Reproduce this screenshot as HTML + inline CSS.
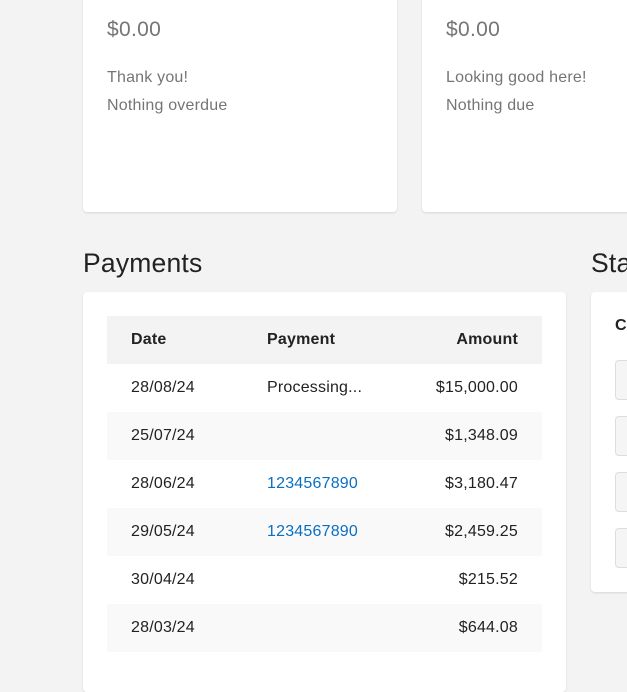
<!DOCTYPE html>
<html><head><meta charset="utf-8"><style>
*{margin:0;padding:0;box-sizing:border-box}
body{width:627px;height:668px;overflow:hidden;background:#f3f3f3;font-family:"Liberation Sans",sans-serif;position:relative}
.card{position:absolute;background:#fff;border-radius:4px;box-shadow:0 1px 2px rgba(0,0,0,.12)}
.amt{position:absolute;font-size:21px;color:#757575;letter-spacing:.3px}
.sub{position:absolute;font-size:16px;color:#757575;line-height:28px;letter-spacing:.2px}
h2{position:absolute;font-weight:400;font-size:26.5px;color:#222;letter-spacing:.2px}
table{position:absolute;left:24px;top:24px;width:435px;border-collapse:collapse;font-size:16px;color:#222;table-layout:fixed;letter-spacing:.2px}
td,th{height:48px;padding:0 24px;text-align:left;white-space:nowrap}
th{font-weight:700;background:#f3f3f3}
tr:nth-child(odd) td{background:#f9f9f9}
.r{text-align:right}
a{color:#0a6fc2;text-decoration:none}
.box{position:absolute;left:24px;width:40px;height:40px;border:1px solid #ddd;border-radius:4px;background:#f5f5f5}
</style></head><body>
<div class="card" style="left:83px;top:-10px;width:314px;height:222px">
<div class="amt" style="left:24px;top:28px">$0.00</div>
<div class="sub" style="left:24px;top:74px">Thank you!<br>Nothing overdue</div></div>
<div class="card" style="left:422px;top:-10px;width:230px;height:222px">
<div class="amt" style="left:24px;top:28px">$0.00</div>
<div class="sub" style="left:24px;top:74px">Looking good here!<br>Nothing due</div></div>
<h2 style="left:83px;top:248px">Payments</h2>
<h2 style="left:591px;top:248px">Sta</h2>
<div class="card" style="left:83px;top:292px;width:483px;height:400px">
<table>
<colgroup><col style="width:136px"><col style="width:150px"><col></colgroup>
<tr><th>Date</th><th>Payment</th><th class="r">Amount</th></tr>
<tr><td>28/08/24</td><td>Processing...</td><td class="r">$15,000.00</td></tr>
<tr><td>25/07/24</td><td></td><td class="r">$1,348.09</td></tr>
<tr><td>28/06/24</td><td><a>1234567890</a></td><td class="r">$3,180.47</td></tr>
<tr><td>29/05/24</td><td><a>1234567890</a></td><td class="r">$2,459.25</td></tr>
<tr><td>30/04/24</td><td></td><td class="r">$215.52</td></tr>
<tr><td>28/03/24</td><td></td><td class="r">$644.08</td></tr>
</table></div>
<div class="card" style="left:591px;top:292px;width:100px;height:300px">
<div style="position:absolute;left:24px;top:25px;font-size:16px;font-weight:700;color:#222">C</div>
<div class="box" style="top:68px"></div>
<div class="box" style="top:124px"></div>
<div class="box" style="top:180px"></div>
<div class="box" style="top:236px"></div>
</div>
</body></html>
